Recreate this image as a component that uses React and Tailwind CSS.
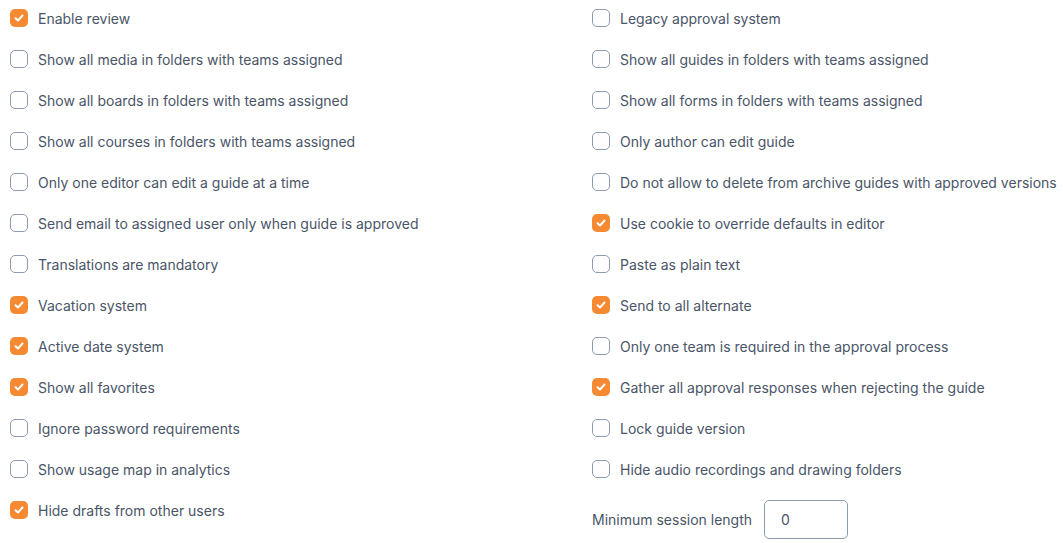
import React from "react";

const left = [
  ["Enable review", true],
  ["Show all media in folders with teams assigned", false],
  ["Show all boards in folders with teams assigned", false],
  ["Show all courses in folders with teams assigned", false],
  ["Only one editor can edit a guide at a time", false],
  ["Send email to assigned user only when guide is approved", false],
  ["Translations are mandatory", false],
  ["Vacation system", true],
  ["Active date system", true],
  ["Show all favorites", true],
  ["Ignore password requirements", false],
  ["Show usage map in analytics", false],
  ["Hide drafts from other users", true],
];

const right = [
  ["Legacy approval system", false],
  ["Show all guides in folders with teams assigned", false],
  ["Show all forms in folders with teams assigned", false],
  ["Only author can edit guide", false],
  ["Do not allow to delete from archive guides with approved versions", false],
  ["Use cookie to override defaults in editor", true],
  ["Paste as plain text", false],
  ["Send to all alternate", true],
  ["Only one team is required in the approval process", false],
  ["Gather all approval responses when rejecting the guide", true],
  ["Lock guide version", false],
  ["Hide audio recordings and drawing folders", false],
];

function Box({ checked }) {
  if (checked) {
    return (
      <span className="flex h-[18px] w-[18px] shrink-0 items-center justify-center rounded-[5px] bg-[#f58a32]">
        <svg width="12" height="12" viewBox="0 0 12 12" fill="none">
          <polyline points="2.5,6.2 5,8.5 9.5,3.5" stroke="white" strokeWidth="2" strokeLinecap="round" strokeLinejoin="round" />
        </svg>
      </span>
    );
  }
  return <span className="block h-[18px] w-[18px] shrink-0 rounded-[5px] border border-[#8d9bb0] bg-white" />;
}

function Row({ label, checked }) {
  return (
    <label className="flex h-5 items-center gap-[10px] whitespace-nowrap">
      <Box checked={checked} />
      <span className="translate-y-[1px]">{label}</span>
    </label>
  );
}

export default function App() {
  return (
    <div
      className="h-[543px] w-[1063px] overflow-hidden bg-white pl-[10px] pt-2 text-[14px] leading-5 text-[#4a5568]"
      style={{ fontFamily: "Inter, 'Noto Sans', sans-serif" }}
    >
      <div className="grid grid-cols-[582px_1fr]">
        <div className="flex flex-col gap-[21px]">
          {left.map(([l, c]) => (
            <Row key={l} label={l} checked={c} />
          ))}
        </div>
        <div className="flex flex-col gap-[21px]">
          {right.map(([l, c]) => (
            <Row key={l} label={l} checked={c} />
          ))}
          <div className="flex items-center gap-3">
            <span>Minimum session length</span>
            <div className="flex h-[39px] w-[84px] items-center rounded-[5px] border border-[#8d9bb0] pl-[16px]">
              0
            </div>
          </div>
        </div>
      </div>
    </div>
  );
}
